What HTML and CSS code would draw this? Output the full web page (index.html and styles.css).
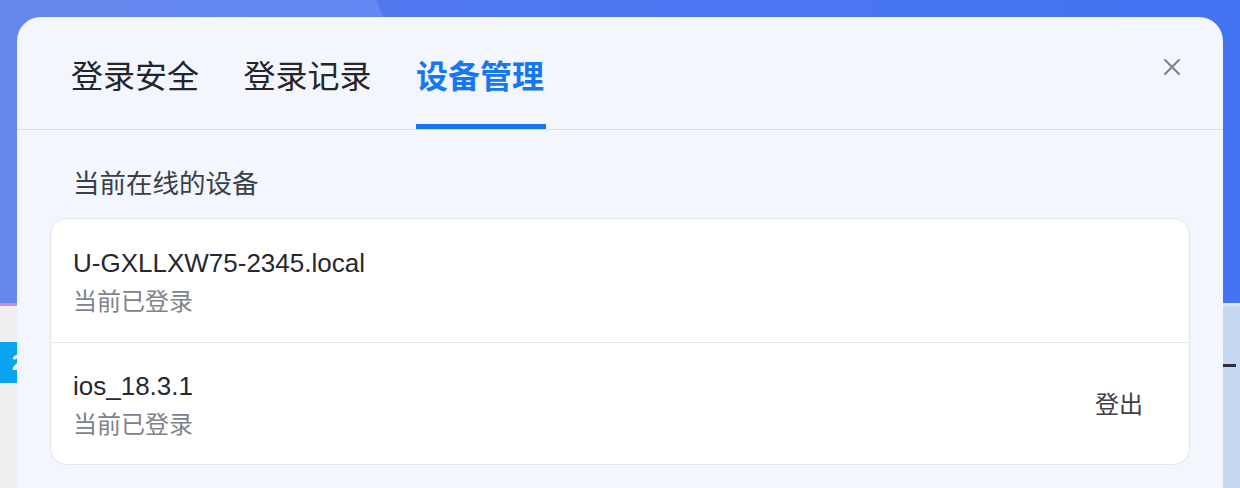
FILE: index.html
```html
<!DOCTYPE html>
<html lang="zh-CN">
<head>
<meta charset="utf-8">
<title>设备管理</title>
<link rel="stylesheet" href="styles.css">
</head>
<body>
<div class="page">
  <div class="page-top"></div>
  <div class="page-strip"><div class="strip-left"></div><div class="strip-right"></div></div>
  <div class="page-body">
    <div class="side"><div class="badge">2</div></div>
    <div class="main"></div>
    <div class="right-panel"><div class="dash"></div></div>
  </div>
</div>

<div class="modal">
  <div class="modal-header">
    <nav class="tabs">
      <div class="tab">登录安全</div>
      <div class="tab">登录记录</div>
      <div class="tab active">设备管理</div>
    </nav>
    <button class="close" aria-label="关闭">
      <svg width="16" height="16" viewBox="0 0 16 16"><path d="M1 1L15 15M15 1L1 15" stroke="#7f8189" stroke-width="2" stroke-linecap="round" fill="none"/></svg>
    </button>
  </div>
  <div class="modal-body">
    <div class="section-title">当前在线的设备</div>
    <div class="device-card">
      <div class="device-row">
        <div class="device-info">
          <div class="device-name">U-GXLLXW75-2345.local</div>
          <div class="device-status">当前已登录</div>
        </div>
      </div>
      <div class="device-row">
        <div class="device-info">
          <div class="device-name">ios_18.3.1</div>
          <div class="device-status">当前已登录</div>
        </div>
        <button class="logout">登出</button>
      </div>
    </div>
  </div>
</div>
</body>
</html>
```

FILE: styles.css
```css
* { box-sizing: border-box; }
html, body {
  margin: 0;
  padding: 0;
  width: 1240px;
  height: 488px;
  overflow: hidden;
  font-family: "Liberation Sans", "Noto Sans CJK SC", sans-serif;
}
body { position: relative; }

.page {
  width: 1240px;
  height: 488px;
  display: flex;
  flex-direction: column;
}
.page-top {
  height: 303px;
  background:
    radial-gradient(ellipse 436px 600px at 0 300px, rgba(130,165,250,0.35) 99.5%, rgba(130,165,250,0) 100%),
    linear-gradient(90deg, #5a77e6 0%, #4e78f1 40%, #4473f1 100%);
}
.page-strip {
  height: 3px;
  display: flex;
}
.strip-left { width: 300px; background: #cf8ad9; }
.strip-right { flex: 1; background: #e2e9f6; }
.page-body {
  flex: 1;
  display: flex;
}
.side {
  width: 300px;
  background: linear-gradient(90deg, #efefef, #f7f7f7);
}
.badge {
  margin-top: 36px;
  width: 60px;
  height: 41px;
  background: #0aa4ee;
  color: #fff;
  font-weight: 700;
  font-size: 22px;
  line-height: 41px;
  padding-left: 12px;
}
.main { flex: 1; background: #fff; }
.right-panel {
  width: 240px;
  background: #c4d8f1;
  display: flex;
  justify-content: flex-end;
}
.dash {
  margin-top: 58px;
  margin-right: 4px;
  width: 13px;
  height: 3px;
  background: #2e3035;
}

.modal {
  position: absolute;
  top: 17px;
  left: 17px;
  width: 1206px;
  height: 471px;
  overflow: hidden;
  background: #f3f6fd;
  border-radius: 24px 24px 0 0;
  display: flex;
  flex-direction: column;
}
.modal-header {
  height: 113px;
  flex: none;
  border-bottom: 1px solid #d9dce2;
  display: flex;
  justify-content: space-between;
  align-items: stretch;
  padding-left: 54px;
}
.tabs {
  display: flex;
  gap: 42.5px;
}
.tab {
  position: relative;
  padding-top: 41px;
  font-family: "Noto Sans CJK SC", sans-serif;
  font-size: 32px;
  line-height: 32px;
  color: #23252a;
  font-weight: 400;
  width: 130px;
}
.tab.active {
  color: #1677f5;
  font-weight: 700;
}
.tab.active::after {
  content: "";
  position: absolute;
  left: 0;
  right: 0;
  bottom: 0;
  height: 5px;
  background: #1677f5;
}
.close {
  margin: 42px 43px 0 0;
  width: 16px;
  height: 16px;
  padding: 0;
  border: 0;
  background: transparent;
  display: block;
}
.close svg { display: block; }

.modal-body {
  padding: 34px 33px 0;
}
.section-title {
  font-family: "Noto Sans CJK SC", sans-serif;
  font-size: 26.5px;
  line-height: 36px;
  color: #3c3f46;
  padding-left: 23px;
}
.device-card {
  margin-top: 18px;
  background: #fff;
  border: 1.5px solid #e4e6ea;
  border-radius: 16px;
}
.device-row {
  height: 122.5px;
  display: flex;
  align-items: center;
  justify-content: space-between;
  padding: 0 46px 0 22px;
}
.device-row + .device-row {
  border-top: 1.5px solid #e8e9ec;
}
.device-info {
  display: flex;
  flex-direction: column;
  gap: 3px;
}
.device-name {
  font-size: 26px;
  line-height: 36px;
  color: #26282d;
}
.device-status {
  font-family: "Noto Sans CJK SC", sans-serif;
  font-size: 24px;
  line-height: 32px;
  color: #80838b;
}
.logout {
  border: 0;
  background: transparent;
  padding: 0;
  font-family: "Noto Sans CJK SC", sans-serif;
  font-size: 24px;
  line-height: 32px;
  color: #3e4048;
}
```
